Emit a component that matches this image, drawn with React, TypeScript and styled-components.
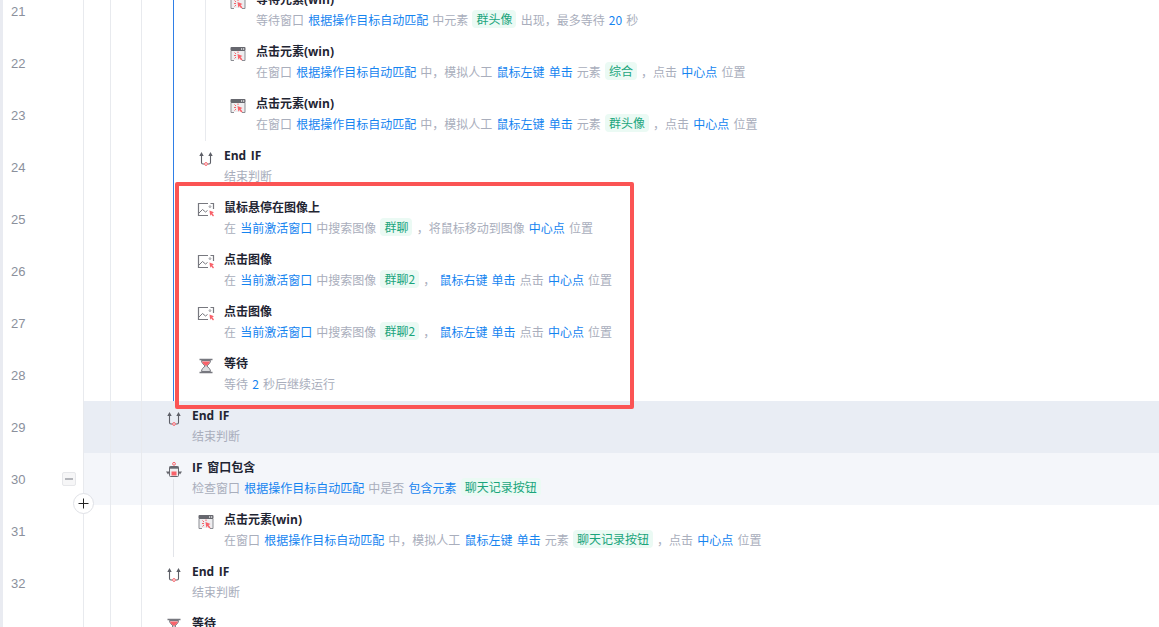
import React from "react";
import styled, { createGlobalStyle } from "styled-components";

const Global = createGlobalStyle`
  html, body { margin: 0; padding: 0; background: #fff; }
  body { font-family: "Noto Sans CJK SC", "Liberation Sans", sans-serif; overflow: hidden; }
`;

const Page = styled.div`
  position: relative;
  height: 627px;
  width: 1159px;
  overflow: hidden;
  border-left: 3px solid #e9ebf1;
  box-sizing: border-box;
`;

const List = styled.div`
  margin-top: -15px;
  display: flex;
  flex-direction: column;
`;

const Row = styled.div`
  display: flex;
  height: 52px;
  position: relative;
`;

const LineNo = styled.div`
  width: 80px;
  flex: none;
  padding-left: 8px;
  box-sizing: border-box;
  display: flex;
  align-items: center;
  font: 13px/1 "Liberation Sans", sans-serif;
  color: #8b909c;
  position: relative;
`;

const Body = styled.div<{ $tone?: "strong" | "soft" }>`
  flex: 1;
  display: flex;
  min-width: 0;
  background: ${(p) => (p.$tone === "strong" ? "#e9edf4" : p.$tone === "soft" ? "#f4f6fa" : "transparent")};
`;

const Guide = styled.div<{ $w: number; $color?: string }>`
  width: ${(p) => p.$w}px;
  flex: none;
  box-sizing: border-box;
  border-left: 1px solid ${(p) => p.$color || "#e8eaee"};
`;

const Step = styled.div`
  display: flex;
  align-items: flex-start;
  padding-top: 5px;
  gap: 9px;
`;

const IconBox = styled.div`
  width: 18px;
  height: 18px;
  flex: none;
  margin-top: 3px;
  svg { display: block; }
`;

const Texts = styled.div`
  display: flex;
  flex-direction: column;
`;

const Title = styled.div`
  font-family: "Open Sans", "Noto Sans CJK SC", sans-serif;
  font-size: 12px;
  line-height: 20px;
  font-weight: 700;
  word-spacing: 1.5px;
  color: #1f2533;
  white-space: nowrap;
`;

const Sub = styled.div`
  display: flex;
  align-items: center;
  gap: 4.15px;
  height: 20px;
  margin-top: -1px;
  font-size: 12px;
  line-height: 19px;
  color: #a9aebc;
  white-space: nowrap;
`;

const Link = styled.span`
  color: #1584f0;
`;

const Tag = styled.span`
  color: #1aa57c;
  background: #ebfaf4;
  border-radius: 4px;
  padding: 0 4px;
  line-height: 18px;
`;

const Fold = styled.div`
  position: absolute;
  left: 59px;
  top: 19px;
  width: 14px;
  height: 14px;
  box-sizing: border-box;
  background: #f6f6f7;
  border: 1px solid #e6e7ea;
  border-radius: 2px;
  display: flex;
  align-items: center;
  justify-content: center;
  &::after { content: ""; width: 8px; height: 2px; background: #b4b6bb; }
`;

const AddButton = styled.div`
  position: absolute;
  left: 70px;
  top: 40px;
  z-index: 2;
  width: 21px;
  height: 21px;
  box-sizing: border-box;
  border-radius: 50%;
  background: #fff;
  border: 1px solid #dfe1e6;
  display: flex;
  align-items: center;
  justify-content: center;
`;

const Stem = styled.div`
  position: absolute;
  left: 170px;
  top: 26px;
  bottom: 0;
  width: 1px;
  background: #e2e4e9;
`;

const Callout = styled.div`
  position: absolute;
  left: 172px;
  top: 182px;
  width: 459px;
  height: 227px;
  box-sizing: border-box;
  border: 4px solid #fb5454;
  border-radius: 2px;
  pointer-events: none;
`;

const WindowIcon = () => (
  <svg width="18" height="18" viewBox="0 0 18 18" fill="none">
    <path d="M2 5.5H16V15H2Z" fill="#eeeef0" />
    <path d="M2 6V15.5H5M13 15.5H16V6" stroke="#8b8d93" strokeWidth="1" />
    <rect x="1.5" y="2" width="15" height="4" rx="1" fill="#66676e" />
    <rect x="12" y="3.4" width="1.2" height="1.2" fill="#fff" />
    <rect x="14" y="3.4" width="1.2" height="1.2" fill="#fff" />
    <path d="M8.5 9l5 2-2 1 2 2.4-1.2 1-2-2.4-1 1.8z" fill="#f8626a" />
    <path d="M5.5 7.5l1.5 1.5M5 10.5h2M5.5 13.5l1.5-1.5M9 6.5v1.5" stroke="#f8626a" strokeWidth="1" />
  </svg>
);

const ImageIcon = () => (
  <svg width="18" height="18" viewBox="0 0 18 18" fill="none">
    <path d="M11 2.5H1.5V14.5H11" stroke="#77787f" strokeWidth="1.2" />
    <path d="M13.5 2.5H16.5V8" stroke="#77787f" strokeWidth="1.2" />
    <path d="M2 12l3.5-3.5 3 2.5 2-1.5" stroke="#77787f" strokeWidth="1" />
    <circle cx="13" cy="5.6" r="0.9" stroke="#77787f" strokeWidth="0.7" />
    <path d="M12.5 9.5l4.5 1.8-1.7 1 1.7 2.2-1 1-2-2.2-.8 1.6z" fill="#f8626a" />
  </svg>
);

const HourglassIcon = () => (
  <svg width="18" height="18" viewBox="0 0 18 18" fill="none">
    <path d="M2.5 2.5H15.5M2.5 15.5H15.5" stroke="#77787f" strokeWidth="1.5" />
    <path d="M4.5 3.5H13.5C13.5 6 11.5 7.5 9.8 9C11.5 10.5 13.5 12 13.5 14.5H4.5C4.5 12 6.5 10.5 8.2 9C6.5 7.5 4.5 6 4.5 3.5Z" fill="#dcdde0" stroke="#77787f" strokeWidth="1" />
    <path d="M5 4.5H13C12.6 6.4 10.8 7.8 9 9C7.2 7.8 5.4 6.4 5 4.5Z" fill="#f8626a" />
  </svg>
);

const EndIfIcon = () => (
  <svg width="18" height="18" viewBox="0 0 18 18" fill="none">
    <path d="M4.5 5V13.5C4.5 14.4 5 15 6 15H7.4M10.6 15H12C13 15 13.5 14.4 13.5 13.5V5" stroke="#5e6068" strokeWidth="1.1" />
    <path d="M2.3 7L4.5 3L6.7 7ZM11.3 7L13.5 3L15.7 7Z" fill="#5e6068" />
    <circle cx="9" cy="15" r="1.4" stroke="#f8626a" strokeWidth="1" />
  </svg>
);

const IfIcon = () => (
  <svg width="18" height="18" viewBox="0 0 18 18" fill="none">
    <circle cx="9" cy="2.8" r="1.4" stroke="#f8626a" strokeWidth="1" />
    <rect x="4.5" y="5.5" width="9" height="10" rx="1" fill="#eeeef0" stroke="#66676e" strokeWidth="1" />
    <rect x="4.5" y="5.5" width="9" height="2.2" fill="#66676e" />
    <rect x="6.5" y="10.5" width="5" height="4" fill="#f8626a" />
    <path d="M1 10.5L3 13.5L5 10.5ZM13 10.5L15 13.5L17 10.5Z" fill="#66676e" />
  </svg>
);

type Seg = { k: "t" | "l" | "g"; v: string };
const t = (v: string): Seg => ({ k: "t", v });
const l = (v: string): Seg => ({ k: "l", v });
const g = (v: string): Seg => ({ k: "g", v });

type Item = {
  no: number;
  level: 0 | 1 | 2;
  icon: React.ReactNode;
  title: string;
  segs: Seg[];
  tone?: "strong" | "soft";
  blue?: boolean;
  fold?: boolean;
};

const clickWin = (no: number, name: string): Item => ({
  no, level: 2, blue: true, icon: <WindowIcon />, title: "点击元素(win)",
  segs: [t("在窗口"), l("根据操作目标自动匹配"), t("中，模拟人工"), l("鼠标左键"), l("单击"), t("元素"), g(name), t("，点击"), l("中心点"), t("位置")],
});

const clickImg = (no: number, name: string, key: string, title: string): Item => ({
  no, level: 1, blue: true, icon: <ImageIcon />, title,
  segs: [t("在"), l("当前激活窗口"), t("中搜索图像"), g(name), t("，"), l(key), l("单击"), t("点击"), l("中心点"), t("位置")],
});

const items: Item[] = [
  { no: 21, level: 2, blue: true, icon: <WindowIcon />, title: "等待元素(win)",
    segs: [t("等待窗口"), l("根据操作目标自动匹配"), t("中元素"), g("群头像"), t("出现，最多等待"), l("20"), t("秒")] },
  clickWin(22, "综合"),
  clickWin(23, "群头像"),
  { no: 24, level: 1, blue: true, icon: <EndIfIcon />, title: "End IF", segs: [t("结束判断")] },
  { no: 25, level: 1, blue: true, icon: <ImageIcon />, title: "鼠标悬停在图像上",
    segs: [t("在"), l("当前激活窗口"), t("中搜索图像"), g("群聊"), t("，将鼠标移动到图像"), l("中心点"), t("位置")] },
  clickImg(26, "群聊2", "鼠标右键", "点击图像"),
  clickImg(27, "群聊2", "鼠标左键", "点击图像"),
  { no: 28, level: 1, blue: true, icon: <HourglassIcon />, title: "等待", segs: [t("等待"), l("2"), t("秒后继续运行")] },
  { no: 29, level: 0, tone: "strong", icon: <EndIfIcon />, title: "End IF", segs: [t("结束判断")] },
  { no: 30, level: 0, tone: "soft", fold: true, icon: <IfIcon />, title: "IF 窗口包含",
    segs: [t("检查窗口"), l("根据操作目标自动匹配"), t("中是否"), l("包含元素"), g("聊天记录按钮")] },
  { no: 31, level: 1, icon: <WindowIcon />, title: "点击元素(win)",
    segs: [t("在窗口"), l("根据操作目标自动匹配"), t("中，模拟人工"), l("鼠标左键"), l("单击"), t("元素"), g("聊天记录按钮"), t("，点击"), l("中心点"), t("位置")] },
  { no: 32, level: 0, icon: <EndIfIcon />, title: "End IF", segs: [t("结束判断")] },
  { no: 33, level: 0, icon: <HourglassIcon />, title: "等待", segs: [t("等待"), l("2"), t("秒后继续运行")] },
];

export default function App() {
  return (
    <>
      <Global />
      <Page>
        <List>
          {items.map((it) => (
            <Row key={it.no}>
              <LineNo>
                {it.no !== 33 && it.no}
                {it.fold && <Fold />}
              </LineNo>
              <Body $tone={it.tone}>
                <Guide $w={27} />
                <Guide $w={31} />
                <Guide $w={it.level === 0 ? 24 : 32} />
                {it.level >= 1 && (
                  <Guide $w={it.level === 2 ? 32 : 24} $color={it.blue ? "#2f7fe6" : "#e2e4e9"} />
                )}
                {it.level === 2 && <Guide $w={24} />}
                <Step>
                  <IconBox>{it.icon}</IconBox>
                  <Texts>
                    <Title>{it.title}</Title>
                    <Sub>
                      {it.segs.map((s, i) =>
                        s.k === "l" ? <Link key={i}>{s.v}</Link> : s.k === "g" ? <Tag key={i}>{s.v}</Tag> : <span key={i}>{s.v}</span>
                      )}
                    </Sub>
                  </Texts>
                </Step>
              </Body>
              {it.fold && (
                <>
                  <Stem />
                  <AddButton>
                    <svg width="11" height="11" viewBox="0 0 11 11"><path d="M5.5 0.5V10.5M0.5 5.5H10.5" stroke="#222" strokeWidth="1" /></svg>
                  </AddButton>
                </>
              )}
            </Row>
          ))}
        </List>
        <Callout />
      </Page>
    </>
  );
}
